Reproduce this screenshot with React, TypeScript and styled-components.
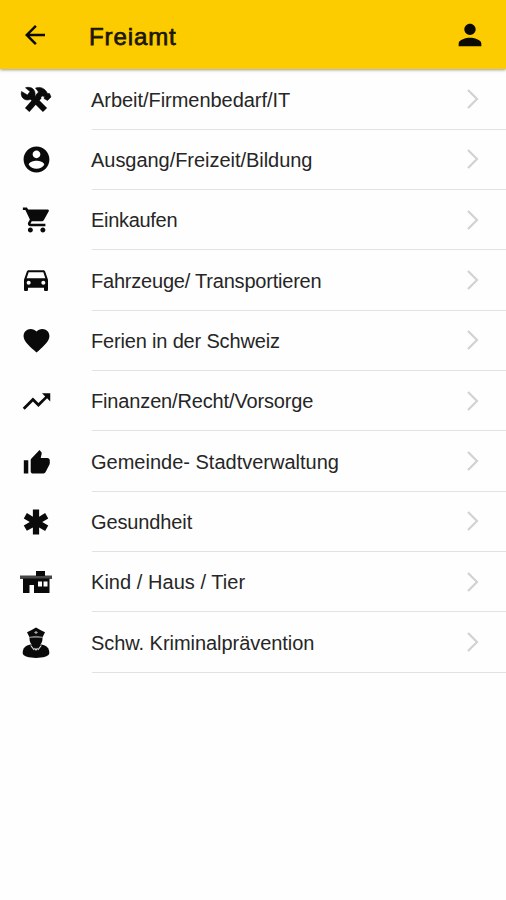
import React from "react";
import styled, { createGlobalStyle } from "styled-components";

const GlobalStyle = createGlobalStyle`
  html, body { margin: 0; background: #fefefe; overflow: hidden; }
  * { box-sizing: border-box; }
`;

const Screen = styled.main`
  width: 506px;
  height: 900px;
  background: #fefefe;
  color: #222;
  font-family: "Liberation Sans", Arial, Helvetica, sans-serif;
`;

const Header = styled.header`
  height: 69px;
  display: flex;
  align-items: center;
  padding: 1px 19px 0 20px;
  background: #fdcc00;
  box-shadow: 0 1px 3px rgba(0, 0, 0, 0.4);
`;

const Title = styled.h1`
  flex: 1;
  margin: 3px 0 0 39px;
  font-size: 24px;
  line-height: 30px;
  font-weight: 400;
  color: #1c1800;
  -webkit-text-stroke: 0.75px #1c1800;
  letter-spacing: 0.9px;
`;

const IconButton = styled.button`
  display: flex;
  padding: 0;
  border: 0;
  background: none;
  color: #0c0b00;
`;

const List = styled.ul`
  margin: 0;
  padding: 0.4px 0 0;
  list-style: none;
`;

const Row = styled.li`
  height: 60.33px;
  display: flex;
  color: #0a0a0a;
`;

const IconCell = styled.div`
  width: 72px;
  display: flex;
  align-items: center;
  justify-content: center;
`;

const RowBody = styled.div`
  flex: 1;
  margin-left: 20px;
  padding-right: 27px;
  display: flex;
  align-items: center;
  justify-content: space-between;
  border-bottom: 1px solid #e2e2e2;
`;

const Label = styled.span<{ $spacing: number }>`
  margin-left: -1px;
  padding-top: 1px;
  font-size: 20px;
  line-height: 24px;
  color: #262626;
  white-space: nowrap;
  letter-spacing: ${(p) => p.$spacing}px;
`;

const Glyph = ({ d, size = 31, box = "0 0 24 24" }: { d: string; size?: number; box?: string }) => (
  <svg width={size} height={size} viewBox={box} fill="currentColor">
    <path d={d} />
  </svg>
);

const Tools = () => (
  <svg width="32" height="32" viewBox="0 0 32 32" fill="none" stroke="currentColor">
    <path d="M10 11 25 26" strokeWidth="5.800" />
    <path d="M19.500 12 7.200 26" strokeWidth="5.800" />
    <path d="M5.500 3.800 10 7.500 7.500 11 1.500 7.500C0 13 4.500 17.500 10 15.500L15 11.500C16 5.500 11 2 5.500 3.800Z" fill="currentColor" stroke="currentColor" strokeWidth=".6" />
    <path d="M15.500 4C20 2.500 23.500 4 26 7L27.500 9.500 29.500 9.500 31 13 27.500 16.500 24 14.500 24.500 12.500 22 12 19 15 15.500 11.500 18.500 8Z" fill="currentColor" stroke="currentColor" strokeWidth=".6" />
  </svg>
);

const House = () => (
  <svg width="34" height="26" viewBox="0 0 34 26" fill="currentColor">
    <path d="M17 2h9v5h-9z" />
    <path d="M1 6.500h32v3.500H1z" fillOpacity=".75" />
    <path fillRule="evenodd" d="M4 9.500h26.500V24H15v-8h-4.500v8H4zM19 12.500v5h4v-5zm5.500 0v5h4v-5z" />
  </svg>
);

const Officer = () => (
  <svg width="28" height="34" viewBox="0 0 28 34" fill="currentColor">
    <path d="M5 6.200Q10 4 14 1.500q4 2.500 9 4.700l-2.500 5h-13z" />
    <path d="M7.500 11.500h13c.2 5.500-2.500 9-6.500 9s-6.700-3.500-6.500-9z" />
    <path d="M8.500 18.500h11c5 .8 7.800 3.500 7.800 8.500 0 6.500-26.600 6.500-26.600 0 0-5 2.800-7.700 7.800-8.500z" />
    <path d="m12 6.500 2-1.500 2 1.500-2 1.500z" fill="#aaa" />
    <path d="M7.500 11.300q6.500-2 13 0" fill="none" stroke="#999" strokeWidth=".9" />
    <path d="m8.700 19.500 3.500 4.500m7.100-4.500-3.500 4.500M12.500 22l1.500 2 1.500-2" fill="none" stroke="#ddd" strokeWidth="1.200" />
  </svg>
);

const Chevron = () => (
  <svg width="12" height="20" viewBox="0 0 12 20" fill="none" stroke="#d2d2d2" strokeWidth="2.200">
    <path d="m1 1 9 9-9 9" />
  </svg>
);

const paths = {
  back: "M20 11H7.830l5.590-5.590L12 4l-8 8 8 8 1.410-1.410L7.830 13H20v-2z",
  person: "M12 12c2.210 0 4-1.790 4-4s-1.790-4-4-4-4 1.790-4 4 1.790 4 4 4zm0 2c-2.670 0-8 1.340-8 4v2h16v-2c0-2.660-5.330-4-8-4z",
  account: "M12 2C6.480 2 2 6.480 2 12s4.480 10 10 10 10-4.480 10-10S17.520 2 12 2zm0 3c1.660 0 3 1.340 3 3s-1.340 3-3 3-3-1.340-3-3 1.340-3 3-3zm0 14.200c-2.500 0-4.710-1.280-6-3.220.030-1.990 4-3.080 6-3.080 1.990 0 5.970 1.090 6 3.080-1.290 1.940-3.500 3.220-6 3.220z",
  cart: "M7 18c-1.100 0-1.990.9-1.990 2S5.900 22 7 22s2-.9 2-2-.9-2-2-2zM1 2v2h2l3.600 7.590-1.350 2.450c-.16.280-.25.610-.25.960 0 1.100.9 2 2 2h12v-2H7.420c-.14 0-.25-.11-.25-.25l.03-.12.900-1.630h7.950c.75 0 1.410-.41 1.750-1.030L21.800 4.800Q22 3.500 21 3.500H5.210L4.270 2H1zm16 16c-1.100 0-1.990.9-1.990 2s.89 2 1.990 2 2-.9 2-2-.9-2-2-2z",
  car: "M18.920 5.010C18.720 4.420 18.160 4 17.500 4h-11c-.66 0-1.210.42-1.420 1.010L3 11v7.500c0 .55.450 1 1 1h1c.55 0 1-.45 1-1V17h12v1.500c0 .55.450 1 1 1h1c.55 0 1-.45 1-1V11l-2.080-5.990zM6.500 14.800c-.83 0-1.500-.67-1.500-1.500s.67-1.500 1.500-1.500 1.500.67 1.500 1.500-.67 1.500-1.500 1.500zm11 0c-.83 0-1.500-.67-1.500-1.500s.67-1.500 1.500-1.500 1.500.67 1.500 1.500-.67 1.500-1.500 1.500zM5 10l1.500-4.500h11L19 10H5z",
  heart: "M12 21.350l-1.450-1.320C5.400 15.360 2 12.280 2 8.500 2 5.420 4.420 3 7.500 3c1.740 0 3.410.81 4.500 2.090C13.090 3.810 14.760 3 16.500 3 19.580 3 22 5.420 22 8.500c0 3.780-3.400 6.860-8.550 11.540L12 21.350z",
  trend: "M16 6l2.290 2.290-4.880 4.880-4-4L2 16.590 3.410 18l6-6 4 4 6.300-6.290L22 12V6z",
  thumb: "M1.500 22h3.700V11H1.500v11zm21.500-11c0-1.100-.9-2-2-2h-5.500l.8-3.570.03-.32c0-.41-.17-.79-.44-1.060L14.500 2.500 8.200 9C7.600 9.500 7.200 10 7.200 10.500V20c0 1.100.9 2 2 2h8.500c.83 0 1.540-.5 1.840-1.220l3.300-6.550c.09-.23.140-.47.140-.73v-2.500z",
  star: "M9.500 2h5v5.700l4.800-2.800 2.500 4.300-4.800 2.800 4.800 2.800-2.500 4.300-4.800-2.800V22h-5v-5.700l-4.800 2.800-2.500-4.300L7 12 2.200 9.200l2.500-4.300 4.800 2.800z",
};

const categories = [
  { label: "Arbeit/Firmenbedarf/IT", icon: <Tools />, spacing: -0.04 },
  { label: "Ausgang/Freizeit/Bildung", icon: <Glyph d={paths.account} />, spacing: -0.04 },
  { label: "Einkaufen", icon: <Glyph d={paths.cart} size={30} box="-0.5 0 24 24" />, spacing: -0.3 },
  { label: "Fahrzeuge/ Transportieren", icon: <Glyph d={paths.car} size={32} />, spacing: -0.21 },
  { label: "Ferien in der Schweiz", icon: <Glyph d={paths.heart} />, spacing: -0.17 },
  { label: "Finanzen/Recht/Vorsorge", icon: <Glyph d={paths.trend} size={33} />, spacing: -0.15 },
  { label: "Gemeinde- Stadtverwaltung", icon: <Glyph d={paths.thumb} size={29} />, spacing: 0 },
  { label: "Gesundheit", icon: <Glyph d={paths.star} size={30} />, spacing: -0.12 },
  { label: "Kind / Haus / Tier", icon: <House />, spacing: 0.04 },
  { label: "Schw. Kriminalprävention", icon: <Officer />, spacing: -0.05 },
];

export default function App() {
  return (
    <Screen>
      <GlobalStyle />
      <Header>
        <IconButton aria-label="Zurück"><Glyph d={paths.back} size={30} /></IconButton>
        <Title>Freiamt</Title>
        <IconButton aria-label="Profil"><Glyph d={paths.person} size={34} /></IconButton>
      </Header>
      <List>
        {categories.map((c) => (
          <Row key={c.label}>
            <IconCell>{c.icon}</IconCell>
            <RowBody>
              <Label $spacing={c.spacing}>{c.label}</Label>
              <Chevron />
            </RowBody>
          </Row>
        ))}
      </List>
    </Screen>
  );
}
